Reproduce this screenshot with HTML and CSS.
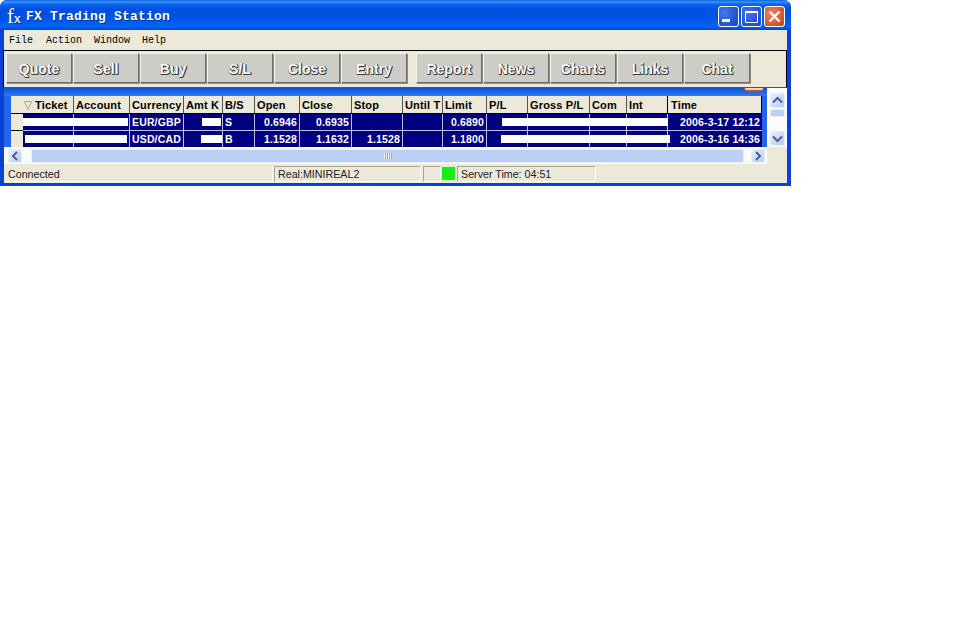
FILE: index.html
```html
<!DOCTYPE html>
<html lang="en">
<head>
<meta charset="utf-8">
<title>FX Trading Station</title>
<link rel="stylesheet" href="styles.css">
</head>
<body>
<div class="window">
  <header class="titlebar">
    <div class="logo"><span class="logo-f">f</span><span class="logo-x">x</span></div>
    <div class="title">FX Trading Station</div>
    <div class="controls">
      <div class="ctl ctl-blue"><svg width="21" height="21" viewBox="0 0 21 21"><rect x="4" y="13" width="8" height="3" fill="#fff"/></svg></div>
      <div class="ctl ctl-blue"><svg width="21" height="21" viewBox="0 0 21 21"><path d="M4.500 5.500h12v11h-12z" fill="none" stroke="#fff"/><path d="M4 5h13v2H4z" fill="#fff"/></svg></div>
      <div class="ctl ctl-red"><svg width="21" height="21" viewBox="0 0 21 21"><path d="M5.500 5.500l10 10M15.500 5.500l-10 10" stroke="#fff" stroke-width="2.400" fill="none"/></svg></div>
    </div>
  </header>
  <div class="body">
    <nav class="menu"><span class="m1">File</span><span class="m2">Action</span><span class="m3">Window</span><span class="m4">Help</span></nav>
    <div class="toolbar">
      <div class="btn">Quote</div><div class="btn">Sell</div><div class="btn">Buy</div><div class="btn">S/L</div><div class="btn">Close</div><div class="btn">Entry</div>
      <div class="sep"></div>
      <div class="btn">Report</div><div class="btn">News</div><div class="btn">Charts</div><div class="btn">Links</div><div class="btn">Chat</div>
    </div>
    <main class="panel">
      <div class="left">
        <div class="tabstrip"><div class="tab-edge"></div></div>
        <div class="grid-wrap">
          <div class="rowheads">
            <div class="rh rh-top"></div>
            <div class="rh"></div>
            <div class="rh rh-last"></div>
          </div>
          <div class="table">
            <div class="row head">
              <div class="hc ticket"><svg class="sort" width="8" height="9" viewBox="0 0 8 9"><path d="M.5 .5h7L4 8.500z" fill="none" stroke="#a8a79c"/></svg>Ticket</div>
              <div class="hc">Account</div><div class="hc">Currency</div><div class="hc">Amt K</div><div class="hc">B/S</div><div class="hc">Open</div><div class="hc">Close</div><div class="hc">Stop</div><div class="hc">Until T</div><div class="hc">Limit</div><div class="hc">P/L</div><div class="hc">Gross P/L</div><div class="hc">Com</div><div class="hc">Int</div><div class="hc time">Time</div>
            </div>
            <div class="row data">
              <div class="c"></div><div class="c"></div><div class="c">EUR/GBP</div><div class="c"></div><div class="c">S</div><div class="c r">0.6946</div><div class="c r">0.6935</div><div class="c r"></div><div class="c"></div><div class="c r">0.6890</div><div class="c"></div><div class="c"></div><div class="c"></div><div class="c"></div><div class="c r t">2006-3-17 12:12</div>
              <div class="mask m-a"></div><div class="mask m-b"></div><div class="mask m-c"></div>
            </div>
            <div class="row data row2">
              <div class="c"></div><div class="c"></div><div class="c">USD/CAD</div><div class="c"></div><div class="c">B</div><div class="c r">1.1528</div><div class="c r">1.1632</div><div class="c r">1.1528</div><div class="c"></div><div class="c r">1.1800</div><div class="c"></div><div class="c"></div><div class="c"></div><div class="c"></div><div class="c r t">2006-3-16 14:36</div>
              <div class="mask m-a2"></div><div class="mask m-b2"></div><div class="mask m-c2"></div>
            </div>
          </div>
          <div class="gutter"></div>
        </div>
        <div class="hscroll">
          <div class="sb-btn"><svg width="14" height="14" viewBox="0 0 14 14"><path d="M9 3L5 7l4 4" fill="none" stroke="#4d6185" stroke-width="2"/></svg></div>
          <div class="h-thumb"><span class="grip"></span></div>
          <div class="sb-btn"><svg width="14" height="14" viewBox="0 0 14 14"><path d="M5 3l4 4-4 4" fill="none" stroke="#4d6185" stroke-width="2"/></svg></div>
        </div>
      </div>
      <div class="vscroll">
        <div class="vcol">
          <div class="sb-btn v"><svg width="15" height="15" viewBox="0 0 15 15"><path d="M3 9.500l4.500-4.500 4.500 4.500" fill="none" stroke="#4d6185" stroke-width="2"/></svg></div>
          <div class="v-thumb"></div>
          <div class="v-track"></div>
          <div class="sb-btn v"><svg width="15" height="15" viewBox="0 0 15 15"><path d="M3 5.500l4.500 4.500 4.500-4.500" fill="none" stroke="#4d6185" stroke-width="2"/></svg></div>
        </div>
      </div>
    </main>
    <footer class="status">
      <div class="s s1">Connected</div>
      <div class="s s2">Real:MINIREAL2</div>
      <div class="s s3"></div>
      <div class="led"></div>
      <div class="s s4">Server Time: 04:51</div>
    </footer>
  </div>
</div>
</body>
</html>
```
FILE: styles.css
```css
html, body { margin: 0; padding: 0; background: #fff; }
.window {
  width: 791px; height: 186px; box-sizing: border-box;
  background: #0a42d8; border-radius: 7px 7px 0 0;
  display: flex; flex-direction: column; overflow: hidden;
  padding-bottom: 3px;
}
.titlebar {
  height: 30px; flex: none; display: flex; align-items: center;
  background: linear-gradient(#0a5fd8 0, #3a93ff 2px, #0a66f0 4px, #0050e0 9px, #0053e6 18px, #0062f5 25px, #0060f0 27px, #0048c8 30px);
  padding: 0 6px 0 5px; box-sizing: border-box;
}
.logo { width: 21px; height: 22px; flex: none; color: #fff; font-family: "Liberation Serif", serif; display: flex; align-items: baseline; margin-top: 2px; }
.logo-f { font-size: 21px; line-height: 22px; margin-left: 2px; text-shadow: 1px 0 0 #0a2a6a; }
.logo-x { font-size: 12px; font-weight: bold; color: #dfe6ee; font-family: "Liberation Sans", sans-serif; line-height: 14px; margin-left: 0; text-shadow: 1px 1px 0 #0a2a6a; }
.title {
  flex: 1; font: bold 13px/16px "Liberation Mono", monospace; letter-spacing: .2px; color: #fff;
  text-shadow: 1px 1px 0 #0a2f90; margin-top: 3px;
}
.controls { display: flex; gap: 2px; margin-top: 3px; }
.ctl { width: 21px; height: 21px; box-sizing: border-box; border: 1px solid #fff; border-radius: 3px; display: flex; align-items: center; justify-content: center; }
.ctl svg { flex: none; margin: -1px; }
.ctl-blue { background: radial-gradient(circle at 30% 30%, #3f78ee, #2456d8 60%, #1c46c4); }
.ctl-red { background: radial-gradient(circle at 35% 35%, #e8866a, #d95a32 60%, #c44020); }

.body { flex: 1; margin: 0 4px; display: flex; flex-direction: column; background: #ece9d8; min-height: 0; }
.menu { height: 20px; flex: none; font: 10px/22px "Liberation Mono", monospace; color: #000; display: flex; padding-left: 5px; }
.m1 { width: 37px; } .m2 { width: 48px; } .m3 { width: 48px; }

.toolbar {
  height: 38px; flex: none; box-sizing: border-box; border: 1px solid #000; border-bottom-color: #555;
  display: flex; gap: 1px; padding: 2px 0 0 2px; margin-left: -1px; background: #ece9d8;
}
.btn {
  width: 66px; height: 30px; flex: none; box-sizing: border-box;
  background: #cdccc6; border: 1px solid; border-color: #f4f3ec #6f6e66 #6f6e66 #f4f3ec;
  box-shadow: 1px 1px 0 #8f8e86;
  font: bold 14px/30px "Liberation Sans", sans-serif; text-align: center; color: #fafafa;
  text-shadow: 1px 0 0 #3c3c38, 0 1px 0 #3c3c38, 1px 1px 0 #3c3c38;
}
.sep { width: 7px; flex: none; }

.panel { height: 77px; flex: none; display: flex; background: #ece9d8; }
.left { width: 763px; flex: none; display: flex; flex-direction: column; }
.tabstrip { height: 8px; flex: none; background: linear-gradient(#0a52d8, #2a7cf0); display: flex; justify-content: flex-end; }
.tab-edge { width: 20px; height: 4px; margin-right: 3px; box-sizing: border-box; border: solid #c94a2e; border-width: 0 1px 2px; border-radius: 0 0 4px 4px; background: #f0d8c8; }
.grid-wrap { height: 51px; flex: none; display: flex; background: #1f66ea; padding-left: 3px; }
.rowheads { width: 16px; flex: none; display: flex; flex-direction: column; padding-left: 4px; box-sizing: border-box; }
.rh { background: #ece9d8; border-bottom: 1px solid #000; height: 17px; flex: none; box-sizing: border-box; }
.rh-top { height: 18px; }
.rh-last { border-bottom: 0; height: 16px; }
.table { width: 739px; flex: none; background: #000080; }
.row { display: grid; grid-template-columns: 51px 56px 54px 39px 32px 45px 52px 51px 40px 44px 41px 62px 37px 41px 94px; }
.row > * { grid-row: 1; }
.head { height: 18px; background: #ece9d8; border-bottom: 1px solid #000; box-sizing: border-box; }
.hc {
  border-right: 1px solid #55544c; box-sizing: border-box; overflow: hidden; white-space: nowrap;
  font: bold 11px/18px "Liberation Sans", sans-serif; color: #000; padding-left: 2px; letter-spacing: .15px;
}
.hc.ticket { display: flex; align-items: center; gap: 3px; padding-left: 1px; }
.sort { flex: none; margin-top: 1px; }
.hc.time { border-right: 1px solid #000; border-left: 1px solid #000; margin-left: -1px; padding-left: 3px; }
.data { height: 17px; }
.row2 { height: 16px; }
.c {
  box-sizing: border-box; border-right: 1px solid #bcc3e0; border-bottom: 1px solid #bcc3e0;
  font: bold 10.5px/16px "Liberation Sans", sans-serif; color: #fff; padding: 0 2px; white-space: nowrap; letter-spacing: .15px;
}
.c:nth-child(1) { grid-column: 1; }
.c:nth-child(2) { grid-column: 2; }
.c:nth-child(3) { grid-column: 3; }
.c:nth-child(4) { grid-column: 4; }
.c:nth-child(5) { grid-column: 5; }
.c:nth-child(6) { grid-column: 6; }
.c:nth-child(7) { grid-column: 7; }
.c:nth-child(8) { grid-column: 8; }
.c:nth-child(9) { grid-column: 9; }
.c:nth-child(10) { grid-column: 10; }
.c:nth-child(11) { grid-column: 11; }
.c:nth-child(12) { grid-column: 12; }
.c:nth-child(13) { grid-column: 13; }
.c:nth-child(14) { grid-column: 14; }
.c:nth-child(15) { grid-column: 15; }
.row2 .c { border-bottom: 0; }
.c.r { text-align: right; }
.c.t { border-right: 0; border-bottom-color: #bcc3e0; padding-right: 2px; letter-spacing: .15px; }
.mask { background: #fff; height: 8px; margin-top: 4px; }
.m-a { grid-column: 1 / span 2; margin-right: 2px; }
.m-b { grid-column: 4; margin-left: 18px; margin-right: 2px; }
.m-c { grid-column: 11 / span 4; margin-left: 15px; }
.m-a2 { grid-column: 1 / span 2; margin-left: 2px; margin-right: 3px; }
.m-b2 { grid-column: 4; margin-left: 17px; margin-right: 1px; }
.m-c2 { grid-column: 11 / span 4; margin-left: 14px; margin-right: -2px; }
.gutter { flex: 1; background: #1f66ea; }
.hscroll { height: 17px; flex: none; display: flex; align-items: center; background: #fbfbf8; padding-left: 4px; }
.sb-btn { width: 14px; height: 14px; flex: none; box-sizing: border-box; background: linear-gradient(135deg, #e4ecfd, #b9cdf6); border: 1px solid #e8eefc; border-radius: 2px; display: flex; align-items: center; justify-content: center; }
.sb-btn svg { flex: none; margin: -1px; }
.h-thumb { width: 713px; height: 14px; margin: 0 7px 0 9px; flex: none; background: #bcd0f7; border: 1px solid #e8eefc; border-radius: 2px; box-sizing: border-box; display: flex; align-items: center; justify-content: center; }
.grip { width: 8px; height: 6px; background: repeating-linear-gradient(90deg, #ecf2fd 0 1px, #8fa9d8 1px 2px); }
.vscroll { flex: 1; display: flex; flex-direction: column; background: #ece9d8; }
.vcol { height: 59px; flex: none; background: #fbfbf8; padding: 5px 0 0 3px; box-sizing: border-box; display: flex; flex-direction: column; }
.sb-btn.v { width: 15px; height: 15px; }
.v-thumb { height: 8px; width: 15px; flex: none; background: #bcd0f7; border: 1px solid #e8eefc; border-radius: 2px; box-sizing: border-box; margin-top: 1px; }
.v-track { height: 14px; flex: none; }

.status { height: 18px; flex: none; display: flex; font: 10.7px/16px "Liberation Sans", sans-serif; color: #222; padding-top: 1px; box-sizing: border-box; }
.s { height: 16px; box-sizing: border-box; border: 1px solid; border-color: #aca899 #fff #fff #aca899; padding-left: 3px; line-height: 15px; flex: none; }
.s1 { width: 269px; border-top-color: transparent; border-left-color: transparent; }
.s2 { width: 147px; margin-left: 1px; }
.s3 { width: 18px; margin-left: 2px; }
.led { width: 13px; height: 13px; background: #14f014; margin: 1px 2px 0 1px; flex: none; }
.s4 { width: 139px; }
```
